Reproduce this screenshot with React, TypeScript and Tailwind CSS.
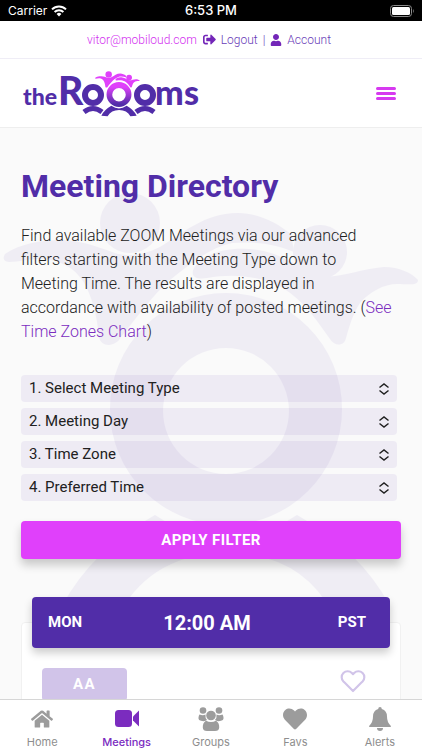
import { FaHeart, FaHome, FaSignOutAlt, FaUser } from "react-icons/fa";
import { FiHeart } from "react-icons/fi";

const filters = [
  { id: "type", label: "1. Select Meeting Type" },
  { id: "day", label: "2. Meeting Day" },
  { id: "zone", label: "3. Time Zone" },
  { id: "time", label: "4. Preferred Time" },
];

// ring with two people on top, used in the logo and behind the page
const Emblem: React.FC<{ people: string; ring: string; arch: string }> = ({ people, ring, arch }) => {
  return (
    <>
      <g fill={people}>
        <circle cx="130" cy="223" r="30" />
        <path d="M5 254C20 244 40 240 62 240C86 241 102 249 118 254C132 257 146 254 160 247C182 234 204 213 238 213C258 213 276 222 291 234L294 252C276 244 254 241 232 243C206 249 188 266 170 280C152 296 137 317 121 337C116 347 101 348 99 337C97 315 92 296 83 281C74 268 62 261 45 259C31 258 20 262 9 262Q1 261 5 254Z" />
        <circle cx="320" cy="252" r="27" />
        <path d="M207 256C222 249 240 247 258 250C284 254 302 270 319 276C339 279 359 269 384 267C399 267 412 273 418 280C418 286 408 284 397 284C384 284 369 292 360 303C352 315 349 328 346 338C344 347 334 346 330 339C318 322 304 301 283 288C261 276 233 273 207 278C190 281 186 270 207 256Z" />
      </g>
      <path
        fill={ring}
        fillRule="evenodd"
        d="M226 293a116 116 0 1 1 0 232a116 116 0 1 1 0-232ZM226 348a63 63 0 1 0 0 126a63 63 0 1 0 0-126Z"
      />
      <path fill={arch} d="M155 515Q226 562 297 515Q360 550 390 606L332 612Q300 553 227 553Q154 553 120 612L62 606Q92 550 155 515Z" />
    </>
  );
};

const StatusBar: React.FC = () => {
  return (
    <div className="grid h-[21px] shrink-0 grid-cols-3 items-center bg-black px-2 font-['Inter',sans-serif] text-xs text-white">
      <div className="flex items-center gap-1">
        <span>Carrier</span>
        <svg width="16" height="12" viewBox="0 0 16 12" fill="none" stroke="currentColor" strokeWidth="2">
          <path d="M1 4.4a10 10 0 0 1 14 0M3.600 7a6.300 6.300 0 0 1 8.800 0" />
          <path d="M8 11.500 5.600 9a3.500 3.500 0 0 1 4.800 0z" fill="currentColor" stroke="none" />
        </svg>
      </div>
      <div className="text-center text-[13px] font-medium">6:53 PM</div>
      <svg className="justify-self-end" width="24" height="12" viewBox="0 0 24 12" fill="none">
        <rect x="0.5" y="0.5" width="21" height="11" rx="3" stroke="#8a8a8a" />
        <rect x="2" y="2" width="18" height="8" rx="1.500" fill="white" />
        <path d="M23 4v4q1.500-2 0-4z" fill="#8a8a8a" />
      </svg>
    </div>
  );
};

const AccountBar: React.FC = () => {
  return (
    <div className="flex h-[38px] shrink-0 items-center justify-center border-b border-[#efedf6] bg-white pr-1 text-xs font-light text-[#673ab7]">
      <a href="#profile" className="text-[#d32ff0]">vitor@mobiloud.com</a>
      <a href="#logout" className="ml-1.5 flex items-center gap-[5px]">
        <FaSignOutAlt size={13} className="text-[#7326b8]" />
        Logout
      </a>
      <span className="mx-[5px]">|</span>
      <a href="#account" className="flex items-center gap-[5px]">
        <FaUser size={12} className="text-[#7326b8]" />
        Account
      </a>
    </div>
  );
};

const Logo: React.FC = () => {
  return (
    <svg width="184" height="54" viewBox="20 66 184 54" role="img" aria-label="theRoooms">
      <defs>
        <linearGradient id="ring" gradientUnits="userSpaceOnUse" x1="0" y1="340" x2="0" y2="500">
          <stop offset="0" stopColor="#e040fb" />
          <stop offset="1" stopColor="#512da8" />
        </linearGradient>
      </defs>
      <g className="font-['Lato',sans-serif] font-black" fill="#512da8">
        <text x="23" y="105" fontSize="23">the</text>
        <text x="58" y="105" fontSize="39">R</text>
        <text x="155" y="105" fontSize="34">m</text>
        <text x="184" y="105" fontSize="34">s</text>
      </g>
      <g fill="none" stroke="#512da8" strokeWidth="6">
        <circle cx="93" cy="95" r="8" />
        <circle cx="145" cy="95" r="8" />
        <path d="M84 112Q93 105 102 112M136 112Q145 105 154 112" strokeWidth="5" />
      </g>
      <circle cx="119" cy="94.500" r="14" fill="white" />
      <path d="M99 118Q119 96 139 118" fill="white" />
      <g transform="translate(94.700 50.500) scale(0.1075)">
        <Emblem people="#e040fb" ring="url(#ring)" arch="#512da8" />
      </g>
    </svg>
  );
};

const MeetingCard: React.FC = () => {
  return (
    <article className="mt-[63px] rounded-sm border border-[#f1f1f1] bg-white px-2.5 pb-6">
      <header className="-mt-[26px] grid h-[51px] grid-cols-3 items-center rounded bg-[#512da8] pr-6 pl-4 text-[15px] font-bold text-white shadow-[0_5px_8px_rgba(0,0,0,0.2)]">
        <span>MON</span>
        <span className="text-center text-xl whitespace-nowrap">12:00 AM</span>
        <span className="text-right">PST</span>
      </header>
      <div className="mt-5 flex items-start justify-between pr-6 pl-2.5">
        <span className="flex h-[33px] w-[85px] items-center justify-center rounded-sm bg-[#d1c4e9] text-[15px] font-bold tracking-widest text-white">
          AA
        </span>
        <button type="button" aria-label="Add to favorites" className="text-[#d1c4e9]">
          <FiHeart size={26} />
        </button>
      </div>
    </article>
  );
};

const VideoIcon: React.FC = () => (
  <svg width="24" height="24" viewBox="0 0 24 24" fill="currentColor">
    <rect x="0" y="3" width="17" height="17" rx="3.500" />
    <path d="M24 3.500v16l-6-6v-4z" />
  </svg>
);

const GroupIcon: React.FC = () => (
  <svg width="26" height="24" viewBox="0 0 26 24" fill="currentColor">
    <circle cx="5" cy="3.500" r="3.300" />
    <circle cx="21" cy="3.500" r="3.300" />
    <path d="M1.500 7.500Q5 9 7.500 7.500Q7 11 9 13Q7.500 14.500 4 14Q0 13.500 .5 10.500Q.7 8.500 1.500 7.500ZM24.500 7.500Q21 9 18.500 7.500Q19 11 17 13Q18.500 14.500 22 14Q26 13.500 25.500 10.500Q25.300 8.500 24.500 7.500Z" />
    <circle cx="13" cy="8.500" r="4.800" />
    <path d="M8 13.700Q13 16.500 18 13.700Q21.500 16 21.200 20.500Q21 24 17 24H9Q5 24 4.800 20.500Q4.500 16 8 13.700Z" />
  </svg>
);

const BellIcon: React.FC = () => (
  <svg width="22" height="24" viewBox="0 0 22 24" fill="currentColor">
    <path d="M11 0Q12.800 0 12.800 2Q18 3.500 18 9.500Q18 15 21.500 18.500Q22.500 20 21 20H1Q-.5 20 .5 18.500Q4 15 4 9.500Q4 3.500 9.200 2Q9.200 0 11 0Z" />
    <path d="M8 21h6a3 3 0 0 1-6 0z" />
  </svg>
);

const tabs = [
  { label: "Home", icon: <FaHome size={22} /> },
  { label: "Meetings", icon: <VideoIcon />, active: true },
  { label: "Groups", icon: <GroupIcon /> },
  { label: "Favs", icon: <FaHeart size={24} /> },
  { label: "Alerts", icon: <BellIcon /> },
];

const TabBar: React.FC = () => {
  return (
    <nav className="grid h-[51px] shrink-0 grid-cols-5 border-t border-[#d6d6d6] bg-white font-['Inter',sans-serif] text-[11px] text-[#8e8e8e]">
      {tabs.map((tab) => (
        <a
          key={tab.label}
          href={"#" + tab.label.toLowerCase()}
          className={tab.active ? "flex flex-col items-center pt-[7px] text-[#7b2cbf]" : "flex flex-col items-center pt-[7px]"}
        >
          <span className={tab.active ? "flex h-6 items-center" : "flex h-6 items-center text-[#9c9c9c]"}>{tab.icon}</span>
          <span className={tab.active ? "mt-[3px] font-medium" : "mt-[3px]"}>{tab.label}</span>
        </a>
      ))}
    </nav>
  );
};

const App: React.FC = () => {
  return (
    <div className="flex h-screen flex-col bg-[#fafafa] font-['Roboto',sans-serif] text-[#212121]">
      <StatusBar />
      <AccountBar />
      <header className="flex h-[69px] shrink-0 items-center justify-between border-b border-[#eeeeee] bg-white pr-[26px] pl-5">
        <a href="#home">
          <Logo />
        </a>
        <button type="button" aria-label="Menu" className="flex w-5 flex-col gap-0.5">
          <span className="h-[3px] rounded-full bg-[#d63af0]" />
          <span className="h-[3px] rounded-full bg-[#d63af0]" />
          <span className="h-[3px] rounded-full bg-[#d63af0]" />
        </button>
      </header>
      <main className="relative isolate min-h-0 flex-1 overflow-y-auto px-[21px] pt-10 [scrollbar-width:none]">
        <svg className="absolute inset-x-0 top-0 -z-10 w-full" viewBox="0 128 422 495" opacity="0.06">
          <Emblem people="#512da8" ring="#512da8" arch="#512da8" />
        </svg>
        <h1 className="text-[32px] leading-9 font-bold text-[#512da8]">Meeting Directory</h1>
        <p className="mt-5 pr-2 text-base leading-6 font-light">
          Find available ZOOM Meetings via our advanced filters starting with the Meeting Type down to Meeting Time. The
          results are displayed in accordance with availability of posted meetings. (
          <a href="#zones" className="text-[#7b2cbf]">See Time Zones Chart</a>)
        </p>
        <form className="mt-[31px]">
          <div className="flex flex-col gap-1.5 pr-1">
            {filters.map((filter) => (
              <div key={filter.id} className="relative">
                <select
                  aria-label={filter.label}
                  className="block h-[27px] w-full appearance-none rounded-sm bg-[#512da8]/7 px-2 text-[15px]"
                >
                  <option>{filter.label}</option>
                </select>
                <svg
                  className="pointer-events-none absolute inset-y-0 right-2 my-auto"
                  width="10"
                  height="12"
                  viewBox="0 0 10 12"
                  fill="none"
                  stroke="#212121"
                  strokeWidth="1.500"
                >
                  <path d="M.5 4.500 5 1l4.500 3.500M.5 7.500 5 11l4.500-3.500" />
                </svg>
              </div>
            ))}
          </div>
          <button
            type="button"
            className="mt-5 h-[38px] w-full rounded-sm bg-[#e040fb] text-[15px] font-bold tracking-wide text-white shadow-[0_6px_10px_rgba(0,0,0,0.2)]"
          >
            APPLY FILTER
          </button>
        </form>
        <MeetingCard />
      </main>
      <TabBar />
    </div>
  );
};

export default App;
